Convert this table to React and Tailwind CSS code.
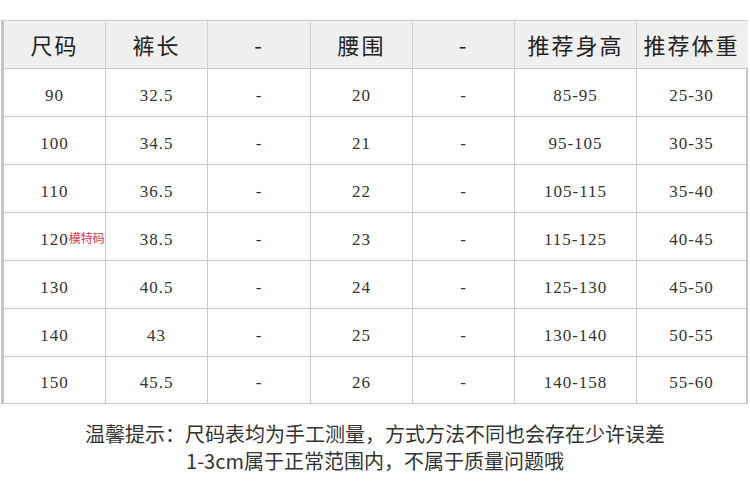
import React from "react";

const head = ["尺码", "裤长", "-", "腰围", "-", "推荐身高", "推荐体重"];

const rows = [
  ["90", "32.5", "-", "20", "-", "85-95", "25-30"],
  ["100", "34.5", "-", "21", "-", "95-105", "30-35"],
  ["110", "36.5", "-", "22", "-", "105-115", "35-40"],
  ["120", "38.5", "-", "23", "-", "115-125", "40-45"],
  ["130", "40.5", "-", "24", "-", "125-130", "45-50"],
  ["140", "43", "-", "25", "-", "130-140", "50-55"],
  ["150", "45.5", "-", "26", "-", "140-158", "55-60"],
];

const cols = "grid grid-cols-[102px_102px_103px_102px_102px_122px_109px]";

const App = () => {
  return (
    <div className="w-[750px] h-[497px] bg-white overflow-hidden">
      <div className="pt-[20px] pl-[1px]">
        <div className="w-[747px] border-l-[3px] border-l-[#c4c4c4]">
          <div className={`${cols} h-[48px] bg-[#efefef] border-t border-[#cfcfcf] pr-[2px]`}>
            {head.map((h, i) => (
              <div
                key={i}
                className={`flex items-center justify-center text-[22px] tracking-[2px] text-[#222] font-['Noto_Sans_CJK_SC',sans-serif] ${
                  i < 6 ? "border-r border-[#d0d0d0]" : ""
                }`}
              >
                {h}
              </div>
            ))}
          </div>
          {rows.map((r, ri) => (
            <div
              key={ri}
              className={`${cols} h-[48px] border-t border-[#c8c8c8] border-r-2 border-r-[#c4c4c4] ${
                ri === rows.length - 1 ? "border-b" : ""
              }`}
            >
              {r.map((c, ci) => (
                <div
                  key={ci}
                  className={`flex items-center justify-center pt-[6px] text-[17px] tracking-[1px] text-[#333] font-['Liberation_Serif',serif] ${
                    ci < 6 ? "border-r border-[#c8c8c8]" : ""
                  }`}
                >
                  <span className="relative">
                    {c}
                    {ri === 3 && ci === 0 && (
                      <span className="absolute left-full top-[2px] whitespace-nowrap tracking-normal text-[12px] text-[#e8334a] font-['Noto_Sans_CJK_SC',sans-serif]">
                        模特码
                      </span>
                    )}
                  </span>
                </div>
              ))}
            </div>
          ))}
        </div>
      </div>
      <div className="mt-[16px] flex flex-col items-center text-[20px] leading-[27px] text-[#333] font-['Noto_Sans_CJK_SC',sans-serif]">
        <div>温馨提示：尺码表均为手工测量，方式方法不同也会存在少许误差</div>
        <div>1-3cm属于正常范围内，不属于质量问题哦</div>
      </div>
    </div>
  );
};

export default App;
